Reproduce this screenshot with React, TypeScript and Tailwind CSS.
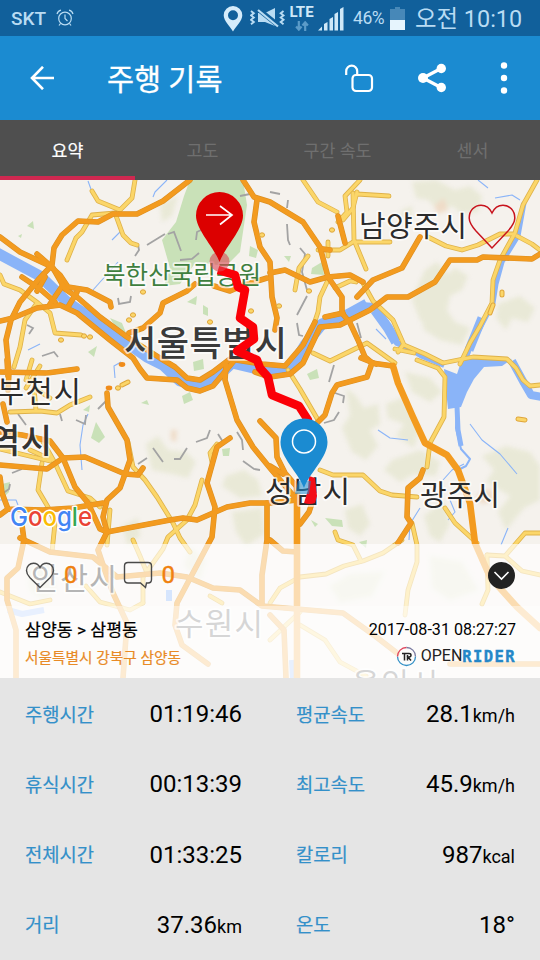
const KR = "font-['Roboto','Noto_Sans_CJK_KR',sans-serif]";

const tabs = ['요약', '고도', '구간 속도', '센서'];

const stats = [
  { label: '주행시간', value: '01:19:46', unit: '' },
  { label: '평균속도', value: '28.1', unit: 'km/h' },
  { label: '휴식시간', value: '00:13:39', unit: '' },
  { label: '최고속도', value: '45.9', unit: 'km/h' },
  { label: '전체시간', value: '01:33:25', unit: '' },
  { label: '칼로리', value: '987', unit: 'kcal' },
  { label: '거리', value: '37.36', unit: 'km' },
  { label: '온도', value: '18°', unit: '' },
];

const hills = [
  'M412 182 L436 180 L455 190 L470 186 L482 196 L478 212 L462 214 L452 206 L440 212 L428 200 L416 198 Z',
  'M402 210 L412 206 L412 216 L400 222 Z',
  'M425 270 L437 262 L448 274 L455 268 L468 276 L462 290 L450 296 L447 310 L455 322 L445 334 L432 330 L420 320 L412 300 L418 285 Z',
  'M420 312 L440 305 L450 320 L470 328 L462 345 L440 340 L424 330 Z',
  'M498 304 L520 296 L535 308 L528 322 L512 318 L506 330 L496 318 Z',
  'M346 388 L356 396 L364 408 L378 404 L380 424 L370 430 L378 446 L366 460 L352 452 L342 428 L350 415 Z',
  'M386 404 L402 398 L412 412 L420 430 L414 448 L396 436 L404 424 L388 418 Z',
  'M392 460 L420 450 L440 462 L436 476 L414 474 L400 482 L384 470 Z',
  'M405 372 L430 378 L442 392 L430 402 L412 392 Z',
  'M482 456 L506 446 L530 452 L540 466 L540 500 L524 508 L506 530 L498 512 L510 496 L486 482 L494 470 Z',
  'M424 516 L444 500 L450 524 L440 542 L430 536 Z',
  'M345 510 L362 504 L370 524 L360 536 L348 528 Z',
  'M146 444 L158 436 L168 450 L186 452 L196 462 L188 478 L172 474 L152 470 Z',
  'M226 476 L244 470 L258 480 L262 496 L240 498 L222 486 Z',
  'M232 512 L262 508 L264 534 L246 546 L236 532 Z',
  'M122 526 L138 518 L140 536 L128 546 Z',
  'M28 568 L52 564 L56 590 L44 600 L30 590 Z',
  'M330 586 L350 574 L384 572 L372 596 L340 602 Z',
  'M430 556 L462 562 L478 590 L450 600 L432 588 Z',
  'M190 546 L206 560 L200 580 L184 566 Z',
  'M160 204 L178 196 L172 216 L162 222 Z',
];

const parks = [
  'M190 180 L243 180 L247 205 L240 252 L226 266 L196 262 L180 284 L164 286 L170 268 L162 240 L176 222 L184 196 Z',
  'M27 226 L33 221 L34 229 Z',
  'M18 236 L22 234 L21 238 Z',
  'M250 246 L258 250 L256 258 L249 256 Z',
  'M312 268 L322 262 L324 275 L311 274 Z',
  'M284 256 L291 256 L289 262 Z',
  'M187 302 L197 296 L196 305 Z',
  'M203 305 L208 308 L208 316 L203 314 Z',
  'M88 352 L97 346 L94 357 Z',
  'M193 362 L203 359 L204 369 L194 371 Z',
  'M182 396 L190 392 L193 400 L184 404 Z',
  'M96 422 L105 437 L99 443 L91 438 Z',
  'M83 410 L90 405 L89 412 Z',
  'M141 403 L147 400 L149 405 Z',
  'M222 449 L230 448 L229 456 L223 456 Z',
  'M2 484 L10 482 L9 492 L3 498 Z',
  'M307 374 L317 369 L319 378 L310 380 Z',
  'M325 518 L342 520 L343 527 L332 526 Z',
  'M311 520 L318 524 L315 527 Z',
  'M359 542 L367 540 L366 548 Z',
  'M110 318 L122 323 L126 333 L116 328 Z',
];

const lake =
  'M444 369 L457 374 L461 362 L477 357 L512 359 L502 366 L484 367 L474 379 L467 392 L461 407 L448 409 L446 390 Z';

const streams = [
  'M167 180 L155 192 L153 197 M176 190 L168 198',
  'M88 181 L92 192',
  'M93 290 L118 262',
  'M112 240 L122 230',
  'M115 378 L114 366 L121 362',
  'M82 470 L80 445 L83 425 L88 414',
  'M0 500 L16 500 L18 505',
  'M376 329 L386 339',
  'M495 198 L512 195 L520 200',
  'M478 180 L488 188',
  'M378 430 L390 438 L408 440',
  'M470 424 L482 440 L500 454 L517 474',
  'M443 480 L452 470 L464 464',
  'M409 540 L410 524 L420 508',
  'M450 500 L455 512 L448 520',
  'M501 545 L508 528',
  'M28 350 L40 344',
];

const rails = [
  'M147 245 L160 237 L165 234 M168 234 L174 232 L181 251',
  'M180 260 L192 259 L199 253',
  'M138 244 L139 250 L135 256',
  'M118 298 L119 304 L130 302 L131 296',
  'M42 356 L54 352 L58 357 M27 325 L33 328 L29 334',
  'M270 192 L280 194 M288 200 L287 208 M287 224 L288 240 L290 245',
  'M300 248 L305 254 L302 272 L307 290',
  'M307 296 L297 315 M297 323 L299 335 L303 336',
  'M357 323 L361 338',
  'M334 365 L329 382',
  'M335 393 L344 396 L343 403 M339 412 L334 420 L324 423',
  'M98 409 L106 401 M62 421 L60 414 M76 420 L85 424 L86 415',
  'M138 464 L147 458 M153 448 L163 462 M174 459 L180 459 L187 448',
  'M196 442 L207 438 L210 430 M218 434 L223 442',
  'M237 432 L242 440 L243 450 M243 461 L254 469 L260 470',
  'M196 240 L197 232 L201 230 M240 196 L250 194',
  'M18 414 L26 425 M12 473 L22 469',
  'M2 494 L9 489 L10 484',
];

const minorRoads = [
  'M135 180 L132 198 L120 210 L98 201 L92 191',
  'M115 213 L123 235 L131 243 L137 245',
  'M115 213 L92 215 L82 232 L76 238 L67 260',
  'M0 275 L4 284 L20 290 L38 303 L50 313 L55 333 L81 335',
  'M37 303 L25 320 L20 347 L14 367',
  'M303 180 L318 202 L337 212',
  'M360 180 L345 196 L347 212 L338 222',
  'M353 193 L354 240 L366 269',
  'M357 192 L353 208 L343 220 M357 194 L389 196',
  'M318 250 L340 250 L353 242 L390 242',
  'M328 242 L328 256',
  'M308 256 L299 268 L295 290',
  'M428 237 L446 246 L462 250 L478 245 L500 234 L513 234',
  'M537 180 L523 205 L515 233 L500 260 L493 280 L492 303 L480 326 L470 343 L460 364',
  'M517 236 L532 244 L540 250',
  'M328 280 L320 297 L318 312 L314 324',
  'M335 288 L350 281 L356 282',
  'M363 283 L373 301 L393 320 L404 345 L425 354 L443 363 L473 357 L507 359 L516 368 L523 380 L530 386 L540 385',
  'M403 345 L398 352 M395 349 L414 353',
  'M313 353 L330 361 L367 343 L395 363',
  'M417 360 L438 368 L445 377 L444 417 L430 443 L427 467',
  'M288 370 L300 389 L318 420',
  'M320 470 L333 475 L363 475 L380 491 L392 495 L417 497',
  'M445 508 L455 523 L477 543',
  'M335 532 L338 540 L353 545 L361 561',
  'M412 523 L417 545 L417 562 L408 590 L405 615',
  'M540 533 L525 533 L505 556 L487 555 M505 556 L522 571 L540 575',
  'M487 555 L488 590 L482 604',
  'M270 603 L280 588 L300 577 L326 574 L344 566 L363 561 L383 553 L402 540',
  'M10 412 L40 411 L57 413 L70 405 L90 397',
  'M42 440 L55 463 L68 491 L90 498 L100 507 M30 450 L52 460',
  'M42 463 L38 490 L48 507 L55 523 L52 552',
  'M128 442 L133 467 L145 480 L157 497 L173 523 L180 538 L190 552',
  'M202 480 L195 505 L187 520 L168 537 L163 549 L143 577 L143 603',
  'M217 444 L210 453 L212 462',
  'M0 449 L25 455 L50 461',
  'M133 540 L140 556 L147 573 M110 510 L107 545',
  'M26 388 L40 366 M32 360 L26 380 M50 398 L34 388 L36 410',
  'M0 592 L30 604 L50 600',
  'M270 640 L300 612 M300 625 L325 640 L340 662 L366 676',
  'M143 603 L130 610 L100 602 L86 586',
  'M222 603 L210 596',
];

const majorRoads = [
  'M190 180 L163 201 L137 214 L113 214 L98 222 L78 221 L62 235 L54 248 L52 265 L38 280 L20 302 L11 320 L6 340 L9 372 L8 390',
  'M0 237 L20 252 L50 266 L60 275 L68 287 L87 290 L110 302 L111 307',
  'M0 321 L13 318 L37 308 L60 305 L77 313 L110 340 L133 358 L140 369 L147 378 L177 380 L187 388 L200 391 L213 386 L233 362',
  'M37 254 L53 268 L65 289 L77 297 L100 317 L127 337 L160 358 L175 367 L187 378 L200 380 L213 372 L230 359 L262 364 L285 366 L303 345 L315 322',
  'M22 277 L40 289 L55 302',
  'M63 285 L50 304 M77 292 L68 307 M45 277 L37 291',
  'M129 333 L143 328 L160 313 L163 303 L187 291 L195 284 M214 286 L230 291 L244 285 L267 278',
  'M243 180 L254 197 L270 202 L303 222 L320 247 L328 277 L342 297 L342 313 L350 323 L358 340 L365 357 L372 363 L393 366',
  'M257 200 L254 222 L260 247 L270 262 L272 297 L277 318 L275 330',
  'M270 273 L285 270 L310 282 L328 277 L350 275 L363 282',
  'M357 297 L373 280 L402 268 L420 237',
  'M540 254 L532 259 L483 257 L477 260 L450 260 L435 282 L408 297 L387 297 L370 310 L340 325 L320 327 L303 363 L290 374 L270 377 L255 372',
  'M325 317 L343 313',
  'M323 249 L330 250 M338 216 L345 243',
  'M372 363 L367 377 L337 385 L332 393 L325 415 L317 423',
  'M361 358 L376 364',
  'M423 470 L420 478 L408 488 L407 517 L411 523 L398 543',
  'M226 365 L225 380 L237 420 L253 447 L270 468 L297 500',
  'M260 421 L276 438 L277 457 L285 473 L297 487',
  'M270 466 L283 474 M0 432 L22 435 L50 441 L63 458 L75 487 L88 503 L100 529 L107 532',
  'M0 465 L47 469 L63 458 L85 457 L125 474 L138 475 L143 468',
  'M107 393 L108 407 L127 440 L130 460 L120 488 L107 500 L103 517 L107 532 L98 550 L104 568 L113 593 L127 623 L123 678',
  'M107 532 L170 520 L183 518 L197 520 L227 507 L250 503 L270 503 L297 500',
  'M0 515 L8 509 L43 510 L73 508 L103 503 M0 477 L2 493 L8 509',
  'M22 525 L24 540 L18 568 L7 578 L7 600 L16 630 L16 678',
  'M20 538 L50 552 L93 557 L117 577 L160 573 L187 577 L213 588 L240 590 L262 606 L343 613 L375 636 L397 653',
  'M230 438 L217 447 L207 483 L215 507 L212 537 L177 603 L175 625 L182 645 L208 664',
  'M267 503 L267 540 L262 575 L262 604',
  'M0 372 L47 373 L77 369 M7 360 L8 376 M3 404 L7 422',
  'M300 524 L309 512 L313 500 M270 540 L283 551 L297 552',
  'M270 615 L284 630 L286 678 M450 664 L540 664',
];

// expressways, drawn a bit heavier
const trunks = [
  'M297 485 L297 678',
  'M393 366 L398 383 L413 417 L425 443 L447 455 L458 470 L470 503 L475 543 L490 577 L517 607 L540 628',
];

const dots = [
  [122, 364.5], [109, 388],
];
const yellowDots = [
  [61, 340], [84, 336], [90, 337], [133, 315], [129, 320], [143, 292], [251, 311],
  [118, 388], [262, 235], [332, 230], [309, 291], [279, 306], [210, 322],
];

const places = [
  { name: '북한산국립공원', x: 103, y: 284, size: 24.5, width: 158, weight: 400, fill: '#3f7f3f' },
  { name: '서울특별시', x: 124, y: 356, size: 35, width: 163, weight: 500, fill: '#3a3a3a' },
  { name: '남양주시', x: 359, y: 237, size: 29, width: 108, weight: 400, fill: '#2b2b2b' },
  { name: '부천시', x: -3, y: 402, size: 29.5, width: 84, weight: 400, fill: '#2b2b2b' },
  { name: '역시', x: -11, y: 453, size: 34, width: 63, weight: 500, fill: '#333' },
  { name: '성남시', x: 265, y: 502, size: 30, width: 85, weight: 400, fill: '#2b2b2b' },
  { name: '광주시', x: 420, y: 506, size: 29, width: 80, weight: 400, fill: '#2b2b2b' },
  { name: '안산시', x: 31, y: 590, size: 30.5, width: 86, weight: 400, fill: '#2b2b2b' },
  { name: '수원시', x: 175, y: 635, size: 31, width: 88, weight: 400, fill: '#333' },
  { name: '용인시', x: 352, y: 694, size: 30, width: 86, weight: 400, fill: '#333' },
];

// Drawn in screen coordinates, the map starts right below the tab bar
function RideMap() {
  return (
    <svg className="absolute inset-0 h-full w-full" viewBox="0 180 540 498" fill="none">
      <rect x="0" y="180" width="540" height="498" fill="#f5f2ed" />
      <g fill="#e9e9d7" className="blur-[2px]">
        {hills.map((d) => (
          <path key={d} d={d} />
        ))}
        <path d="M434 206 L444 198 L448 210 L438 214 Z M476 496 L490 488 L496 500 L482 504 Z M171 430 L177 430 L176 442 L171 440 Z" fill="#efdcc8" />
      </g>
      <g fill="#c9e1b8">
        {parks.map((d) => (
          <path key={d} d={d} />
        ))}
      </g>
      <g stroke="#8ab4f8" strokeLinejoin="round">
        <path d="M-3 253 L40 276 L67 302 L100 324 L127 343 L147 357 L163 365 L180 381 L200 386 L215 379 L232 363 L262 370 L290 370 L305 345 L322 324 L347 315 L367 304" strokeWidth="11" />
        <path d="M362 305 L374 306 L386 322 L397 343 L402 345" strokeWidth="6" />
        <path d="M375 310 L388 328 L396 342" strokeWidth="10" />
        <path d="M402 345 L422 357 L444 366" strokeWidth="4" />
        <path d="M524 203 L518 236 L502 262 L496 284 L493 303 L480 328 L471 345 L464 364" strokeWidth="5" />
        <path d="M482 318 L469 350" strokeWidth="9" />
        <path d="M512 361 L524 383 L531 395 L542 397" strokeWidth="8" />
        <path d="M457 405 L456 428 L461 449 L470 459 L466 466 L456 471" strokeWidth="2" />
        <path d="M457 406 L458 430 L461 446" strokeWidth="5" />
        <path d="M8 610 L22 614 L44 610 M169 590 L169 601 M292 660 L293 678" strokeWidth="6" />
        {streams.map((d) => (
          <path key={d} d={d} strokeWidth="1.1" />
        ))}
      </g>
      <path d={lake} fill="#8ab4f8" />
      <g stroke="#a3a3a3" strokeWidth="1.8">
        {rails.map((d) => (
          <path key={d} d={d} />
        ))}
      </g>
      <g strokeLinecap="round" strokeLinejoin="round">
        {minorRoads.map((d) => (
          <path key={d} d={d} stroke="#dfb24a" strokeWidth="4.8" />
        ))}
        {minorRoads.map((d) => (
          <path key={d} d={d} stroke="#fbd669" strokeWidth="3.2" />
        ))}
        {majorRoads.map((d) => (
          <path key={d} d={d} stroke="#dc8f22" strokeWidth="5.6" />
        ))}
        {majorRoads.map((d) => (
          <path key={d} d={d} stroke="#f39b1f" strokeWidth="4.4" />
        ))}
        {trunks.map((d) => (
          <path key={d} d={d} stroke="#f39b1f" strokeWidth="6.6" />
        ))}
      </g>
      {yellowDots.map(([cx, cy]) => (
        <ellipse key={`${cx}-${cy}`} cx={cx} cy={cy} rx="2.6" ry="2.2" fill="#fbd669" stroke="#dfa63c" />
      ))}
      {dots.map(([cx, cy]) => (
        <ellipse key={`${cx}-${cy}`} cx={cx} cy={cy} rx="3.3" ry="2.4" fill="#f08c1a" />
      ))}
      <path d="M122 385 L128 382 M490 313 L493 305 M502 292 L502 295 M518 419 L525 420" stroke="#dfa63c" strokeWidth="5" strokeLinecap="round" />
      <path d="M122 385 L128 382 M490 313 L493 305 M502 292 L502 295 M518 419 L525 420" stroke="#fbd669" strokeWidth="3" strokeLinecap="round" />

      <g
        className="font-['Noto_Sans_CJK_KR',sans-serif]"
        stroke="#fff"
        strokeOpacity="0.7"
        strokeWidth="3.5"
        strokeLinejoin="round"
        paintOrder="stroke"
      >
        {places.map((p) => (
          <text key={p.name} x={p.x} y={p.y} fontSize={p.size} fontWeight={p.weight} textLength={p.width} fill={p.fill}>
            {p.name}
          </text>
        ))}
      </g>

      <path d="M218 270 L235 275 L238 287 L245 290 L240 318 L253 327 L254 339 L237 351 L257 360 L260 368 L268 377 L272 395 L299 406 L308 420 L313 450" stroke="#fb0007" strokeWidth="8.500" strokeLinejoin="round" />
      <path d="M304 503 Q310 505 315 503 L317 496 L315 478 L309 476 L308 490 Z" fill="#f30d18" />
      <circle cx="219.500" cy="261.500" r="10" fill="#dc4a55" fillOpacity="0.6" />
      <path d="M219.500 262 C214 247 196 230 196 215.500 A23.500 23.500 0 0 1 243 215.500 C243 230 225 247 219.500 262 Z" fill="#dc0000" />
      <path d="M206 215 H232 M220 206 L232 215 L220 224.500" stroke="#fff" strokeWidth="1.700" />
      <path d="M298 481 H311 L309 494 H295 Z" fill="#1b8bd1" fillOpacity="0.55" />
      <path d="M304 488 C298 472 280.500 458 280.500 442 A23.500 23.500 0 0 1 327.500 442 C327.500 458 310 472 304 488 Z" fill="#1b8bd1" />
      <circle cx="304" cy="441.500" r="11.500" stroke="#fff" strokeWidth="1.500" />

      <text x="10" y="526" fontSize="26" fontWeight="500" textLength="82" lengthAdjust="spacingAndGlyphs" className="font-['Inter',sans-serif]" stroke="#fff" strokeWidth="3" paintOrder="stroke" strokeLinejoin="round">
        <tspan fill="#4285f4">G</tspan>
        <tspan fill="#ea4335">o</tspan>
        <tspan fill="#fbbc05">o</tspan>
        <tspan fill="#4285f4">g</tspan>
        <tspan fill="#34a853">l</tspan>
        <tspan fill="#ea4335">e</tspan>
      </text>
    </svg>
  );
}

function StatusBar() {
  return (
    <div className="flex h-9 items-center bg-[#11609b] pl-[11px] pr-[17px] text-[#b9dcf3]">
      <span className="w-[36px] text-[19px] font-medium leading-none">SKT</span>
      <svg className="ml-[9px] h-[18px] w-[18px]" viewBox="0 0 18 18" fill="none" stroke="currentColor" strokeWidth="1.200">
        <circle cx="9" cy="9.500" r="6.300" />
        <path d="M9 5.500 V9.500 L11.500 12 M1 5 C1.500 3 3 1.600 5 1.200 M17 5 C16.500 3 15 1.600 13 1.200 M4.500 14.500 L3 16.500 M13.500 14.500 L15 16.500" />
      </svg>
      <svg className="ml-auto h-[27px] w-[20px]" viewBox="0 0 20 27" fill="#d5ecfb">
        <path fillRule="evenodd" d="M10 1 a9.300 9.300 0 0 1 9.300 9.300 C19.300 16 13 21 10 26.500 C7 21 .7 16 .7 10.300 A9.300 9.300 0 0 1 10 1 Z M10 5.300 a5 5 0 1 0 0 10 a5 5 0 1 0 0 -10 Z" />
      </svg>
      <svg className="ml-[7px] h-[22px] w-[36px]" viewBox="0 0 36 22" fill="none" stroke="currentColor">
        <path d="M1 4 l2.800 2.200 -2.800 2.200 2.800 2.200 -2.800 2.200 2.800 2.200 -2.800 2.200" strokeWidth="1.900" />
        <path d="M33.500 4 l-2.800 2.200 2.800 2.200 -2.800 2.200 2.800 2.200 -2.800 2.200 2.800 2.200" strokeWidth="1.900" />
        <path d="M8 6 h7 l10 -5 v18 l-10 -4 h-7 Z" fill="currentColor" stroke="none" />
        <path d="M8 2 L29 19" stroke="#11609b" strokeWidth="5" />
        <path d="M8 3 L28 19.500" strokeWidth="2.200" />
      </svg>
      <div className="ml-[3px] flex w-[25px] flex-col items-center">
        <span className="text-[15px] font-bold leading-[13px] text-[#cfe8f8]">LTE</span>
        <svg className="mt-[2px] h-[10px] w-[14px]" viewBox="0 0 15 11" fill="none" stroke="#5b9bc8" strokeWidth="2.400">
          <path d="M4 0 V9 M1 6 L4 9.500 L7 6 M11 11 V2 M8 5 L11 1.500 L14 5" />
        </svg>
      </div>
      <svg className="ml-[4px] h-[25px] w-[26px]" viewBox="0 0 26 25" fill="#cfe8f8">
        <path d="M0 24.500 L4 20.500 V24.500 Z M6 18 l3.500 -2 v8.500 h-3.500 Z M11.500 13 l3.500 -2 v13.500 h-3.500 Z M16.500 8 l3.500 -2 v18.500 h-3.500 Z M22 3 l3.500 -2 v23.500 h-3.500 Z" />
      </svg>
      <span className="ml-[9px] w-[32px] pt-[2px] text-[17.500px] leading-none tracking-tight">46%</span>
      <svg className="ml-[5px] h-[23px] w-[15px]" viewBox="0 0 15 23">
        <path d="M5 0 h5 v2 h5 v11 H0 V2 h5 Z" fill="#4788b8" />
        <rect y="13" width="15" height="10" fill="#e6f4fd" />
      </svg>
      <span className="ml-[10px] w-[108px] whitespace-nowrap pt-[3px] text-[23.400px] leading-none">오전 10:10</span>
    </div>
  );
}

function Header() {
  return (
    <header className="flex h-[84px] items-center bg-[#1b8bd1] pl-[30px] pr-[32px] text-white">
      <svg className="h-6 w-6" viewBox="0 0 24 24" fill="none" stroke="currentColor" strokeWidth="2.600">
        <path d="M24 12 H2 M13 0.800 L2 12 L13 23.200" />
      </svg>
      <h1 className="ml-[53px] pt-[6px] text-[29.400px] leading-none [-webkit-text-stroke:0.3px_white]">주행 기록</h1>
      <svg className="ml-auto h-[30px] w-[30px]" viewBox="0 0 30 30" fill="none" stroke="currentColor" strokeWidth="2.200">
        <rect x="8.500" y="12" width="19.500" height="16" rx="3.500" />
        <path d="M2.200 12 V8.200 A5.500 5.500 0 0 1 13.200 8.200 V12" />
      </svg>
      <svg className="ml-[43px] h-[30px] w-[30px]" viewBox="0 0 30 30" fill="currentColor">
        <path d="M6 15 L24 5.500 M6 15 L24 24.500" stroke="currentColor" strokeWidth="3.200" />
        <circle cx="6" cy="15" r="5" />
        <circle cx="24.300" cy="5.500" r="4.700" />
        <circle cx="24.300" cy="24.500" r="4.700" />
      </svg>
      <svg className="ml-[53px] h-[32px] w-[8px]" viewBox="0 0 8 32" fill="currentColor">
        <circle cx="4" cy="3.500" r="3.200" />
        <circle cx="4" cy="16" r="3.200" />
        <circle cx="4" cy="28.500" r="3.200" />
      </svg>
    </header>
  );
}

function RideInfo() {
  return (
    <div className="relative">
      <div className="flex h-[62px] items-center bg-white/65 pl-[25px] pr-[25px]">
        <svg className="h-[27px] w-[30px]" viewBox="0 0 30 27" fill="none" stroke="#4a4a4a" strokeWidth="1.400">
          <path d="M15 25.500 L5 15.800 C2.800 13.500 1.500 11.500 1.500 8.500 C1.500 4.200 4.800 1.200 8.500 1.200 C11.300 1.200 13.800 2.800 15 5.500 C16.200 2.800 18.700 1.200 21.500 1.200 C25.200 1.200 28.500 4.200 28.500 8.500 C28.500 11.500 27.200 13.500 25 15.800 Z" />
        </svg>
        <span className="ml-[9px] text-[24px] leading-none text-[#f0810f] [-webkit-text-stroke:0.4px_#f0810f]">0</span>
        <svg className="ml-[45px] h-[28px] w-[30px]" viewBox="0 0 30 28" fill="none" stroke="#4a4a4a" strokeWidth="1.400">
          <path d="M5 1.500 H25 Q28.500 1.500 28.500 5 V18.500 Q28.500 22 25 22 H23.500 L22.500 26.500 L17.500 22 H5 Q1.500 22 1.500 18.500 V5 Q1.500 1.500 5 1.500 Z" />
        </svg>
        <span className="ml-[9px] text-[24px] leading-none text-[#f0810f] [-webkit-text-stroke:0.4px_#f0810f]">0</span>
        <svg className="ml-auto h-[27px] w-[27px]" viewBox="0 0 27 27" fill="none">
          <circle cx="13.500" cy="13.500" r="13.500" fill="#222" />
          <path d="M6.500 10 L13.500 17 L20.500 10" stroke="#fff" strokeWidth="1.600" />
        </svg>
      </div>
      <div className="flex h-[72px] justify-between bg-white/80 pl-[25px] pr-[24px]">
        <div>
          <p className="mt-[12px] text-[17.300px] leading-[24px] text-black [-webkit-text-stroke:0.2px_black]">삼양동 &gt; 삼평동</p>
          <p className="mt-[6px] text-[14.700px] leading-[20px] text-[#e88a26] [-webkit-text-stroke:0.2px_#e88a26]">서울특별시 강북구 삼양동</p>
        </div>
        <div className="flex flex-col items-end">
          <p className="mt-[12px] text-[16.100px] leading-[24px] text-black">2017-08-31 08:27:27</p>
          <div className="mt-[4px] flex h-[20px] items-center">
            <svg className="mr-[4px] h-[21px] w-[21px]" viewBox="0 0 21 21" fill="none">
              <path d="M1.500 10.500 a9 9 0 0 0 18 0" stroke="#3290c6" strokeWidth="1.300" />
              <path d="M1.500 10.500 a9 9 0 0 1 9 -9" stroke="#e0435a" strokeWidth="1.300" />
              <path d="M10.500 1.500 a9 9 0 0 1 9 9" stroke="#7a7aa0" strokeWidth="1.300" />
              <path d="M6 7.500 H13 Q15 7.500 15 9.200 T13 11 H12 L15 14.500 M8.500 7.500 V14.500 M11.500 9 V14.500" stroke="#222" strokeWidth="1.500" />
            </svg>
            <span className="text-[16px] leading-[20px] text-[#222]">OPEN</span>
            <span className="pt-[3px] font-['DejaVu_Sans_Mono',monospace] text-[15.500px] font-bold leading-[17px] tracking-[1.400px] text-[#2487c8] [-webkit-text-stroke:0.4px_#2487c8]">
              RIDER
            </span>
          </div>
        </div>
      </div>
    </div>
  );
}

export default function App() {
  return (
    <div className={`flex h-[960px] w-[540px] flex-col overflow-hidden bg-[#e5e5e5] ${KR}`}>
      <StatusBar />
      <Header />
      <nav className="flex h-[60px] bg-[#4f4f4f]">
        {tabs.map((tab, i) => (
          <button
            key={tab}
            type="button"
            className={
              i === 0
                ? 'w-[135px] border-b-4 border-[#cf2850] pt-[7px] text-[17.300px] text-white [-webkit-text-stroke:0.2px_white]'
                : 'w-[135px] border-b-4 border-transparent pt-[7px] text-[17.300px] text-[#6f6f6f]'
            }
          >
            {tab}
          </button>
        ))}
      </nav>

      <section className="relative flex h-[498px] flex-col justify-end">
        <RideMap />
        <svg className="absolute right-[24px] top-[24px] h-[46px] w-[48px]" viewBox="0 0 48 46" fill="none" stroke="#c8141e" strokeWidth="1.500">
          <path d="M24 44 L8 27 C4 22.500 1.200 19 1.200 14 C1.200 6.500 6.500 1.200 13 1.200 C17.500 1.200 21.800 4.200 24 9 C26.200 4.200 30.500 1.200 35 1.200 C41.500 1.200 46.800 6.500 46.800 14 C46.800 19 44 22.500 40 27 Z" />
        </svg>
        <RideInfo />
      </section>

      <section className="grid flex-1 grid-cols-[217px_219px] grid-rows-4 gap-x-[54px] px-[25px] pt-px">
        {stats.map((s) => (
          <div key={s.label} className="flex items-center justify-between">
            <span className="pt-[4px] text-[18.800px] leading-none text-[#3390c9] [-webkit-text-stroke:0.2px_#3390c9]">{s.label}</span>
            <span className="text-[24px] leading-none text-black">
              {s.value}
              <span className="text-[18px]">{s.unit}</span>
            </span>
          </div>
        ))}
      </section>
    </div>
  );
}
